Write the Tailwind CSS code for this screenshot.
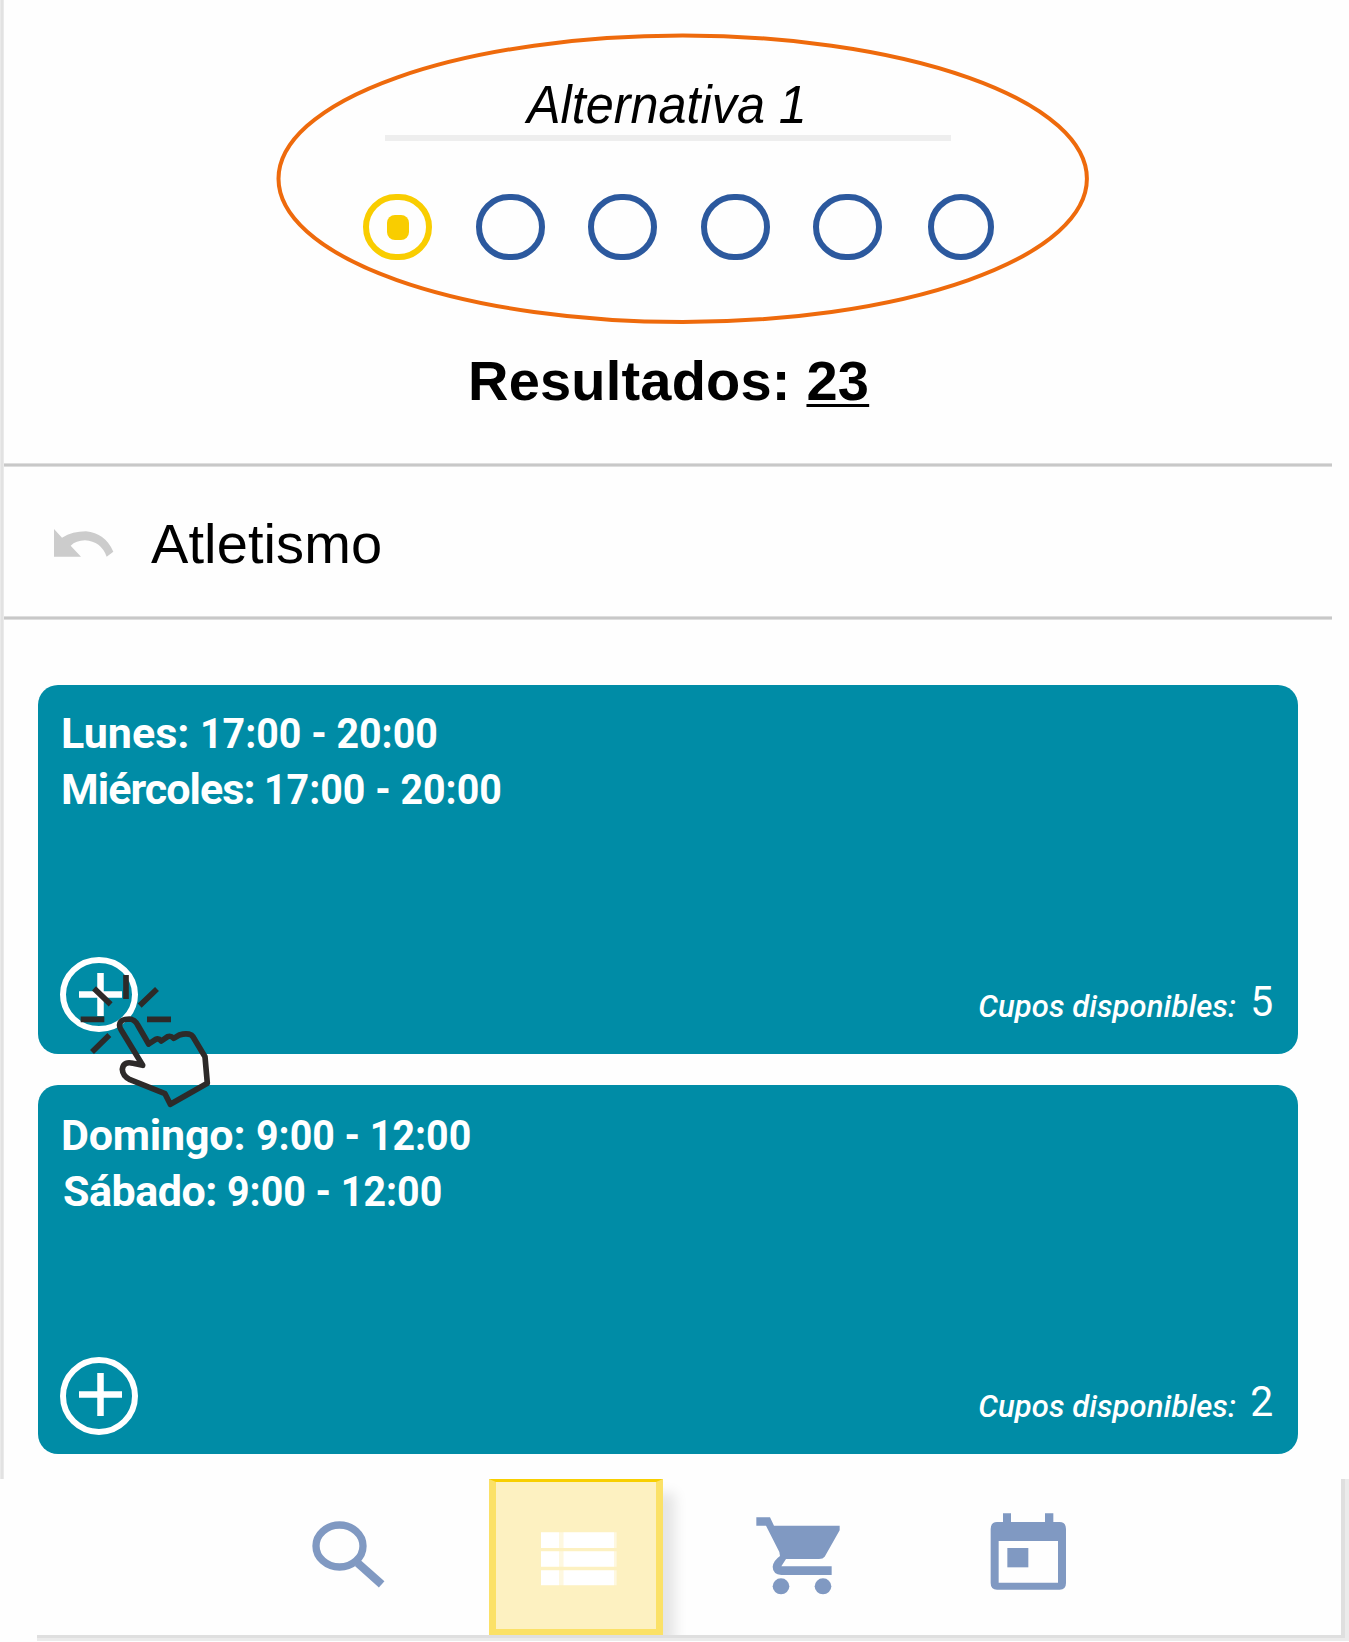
<!DOCTYPE html>
<html lang="es">
<head>
<meta charset="utf-8">
<title>Resultados</title>
<script src="https://cdn.jsdelivr.net/npm/@tailwindcss/browser@4"></script>
</head>
<body class="bg-[#fefefe] w-[1349px] h-[1642px] overflow-hidden font-['Liberation_Sans',Arial,sans-serif] text-black">
<div class="relative flex flex-col w-[1349px] h-[1642px]">
  <div class="h-[1479px] flex pr-[17px]">
    <div class="w-[4px] shrink-0 bg-[#e2e2e2] border-x border-[#eaeaea]"></div>
    <main class="flex-1 flex flex-col">
      <header class="h-[463px] flex flex-col">
        <div class="ml-[381px] w-[566px] h-[141px] pt-[78px] border-b-6 border-[#eeeeee]">
          <h1 class="ml-[142px] w-max text-[53px] leading-[53px] italic whitespace-nowrap origin-left scale-x-[0.95]">Alternativa 1</h1>
        </div>
        <div class="ml-[359px] mt-[53px] flex gap-[43.5px]">
          <span class="w-[69px] h-[66px] rounded-full border-6 border-[#f9cd00] flex items-center justify-center"><i class="w-[22px] h-[25px] rounded-[8px] bg-[#f9cd00]"></i></span>
          <span class="w-[69px] h-[66px] rounded-full border-6 border-[#2c599e]"></span>
          <span class="w-[69px] h-[66px] rounded-full border-6 border-[#2c599e]"></span>
          <span class="w-[69px] h-[66px] rounded-full border-6 border-[#2c599e]"></span>
          <span class="w-[69px] h-[66px] rounded-full border-6 border-[#2c599e]"></span>
          <span class="ml-[2px] w-[66px] h-[66px] rounded-full border-6 border-[#2c599e]"></span>
        </div>
        <p class="ml-[464px] mt-[93px] text-[56px] leading-[56px] tracking-[0.2px] font-bold whitespace-nowrap">Resultados: <span class="underline decoration-[3px] underline-offset-[4px] [text-decoration-skip-ink:none]">23</span></p>
      </header>
      <div class="h-[4px] bg-[#c8c8c8] border-y border-[#dedede]"></div>
      <div class="h-[149px] flex items-start">
        <svg class="ml-[50px] mt-[62px] w-[60px] h-[28px]" viewBox="162 238 180 84" fill="#cccccc"><path d="M162 238L186 264Q218 245 258 245Q315 250 340 306L320 321Q303 275 255 272Q228 273 212 288L243 321H162Z"/></svg>
        <h2 class="ml-[37px] mt-[49px] text-[56px] leading-[56px] tracking-[0.1px] whitespace-nowrap">Atletismo</h2>
      </div>
      <div class="h-[4px] bg-[#c8c8c8] border-y border-[#dedede]"></div>
      <section class="mt-[65px] ml-[34px] w-[1260px] flex flex-col gap-[31px] text-white font-[Roboto,sans-serif]">
        <article class="h-[369px] rounded-[20px] bg-[#008ca6] flex flex-col justify-between">
          <div class="pl-[23px] pt-[20px] text-[43px] leading-[56px] font-bold whitespace-nowrap">
            <p>Lunes: <span class="inline-block origin-left scale-x-[0.915]">17:00 - 20:00</span></p>
            <p><span class="tracking-[-0.95px]">Miércoles: </span><span class="inline-block origin-left scale-x-[0.915]">17:00 - 20:00</span></p>
          </div>
          <div class="flex justify-between items-start h-[97px] pl-[22px] pr-[25px]">
            <svg class="w-[78px] h-[76px]" viewBox="0 0 78 76" fill="none" stroke="#fff"><ellipse cx="39" cy="37.500" rx="36" ry="34.500" stroke-width="6"/><path d="M19 37.500H62M40.500 16V59" stroke-width="6.500"/></svg>
            <p class="mt-[23px] leading-[43px] text-[31px] whitespace-nowrap"><em class="relative top-px mr-[5px] font-medium tracking-[0.1px]">Cupos disponibles:</em> <span class="text-[43px] inline-block origin-right scale-x-[0.95]">5</span></p>
          </div>
        </article>
        <article class="h-[369px] rounded-[20px] bg-[#008ca6] flex flex-col justify-between">
          <div class="pl-[23px] pt-[22px] text-[43px] leading-[56px] font-bold whitespace-nowrap">
            <p><span class="tracking-[-0.2px]">Domingo: </span><span class="inline-block origin-left scale-x-[0.915]">9:00 - 12:00</span></p>
            <p><span class="ml-[2px] tracking-[-0.5px]">Sábado: </span><span class="inline-block origin-left scale-x-[0.915]">9:00 - 12:00</span></p>
          </div>
          <div class="flex justify-between items-start h-[97px] pl-[22px] pr-[25px]">
            <svg class="w-[78px] h-[78px]" viewBox="0 0 78 78" fill="none" stroke="#fff"><circle cx="39" cy="39" r="36" stroke-width="6"/><path d="M19 37.500H62M40.500 16V59" stroke-width="6.500"/></svg>
            <p class="mt-[23px] leading-[43px] text-[31px] whitespace-nowrap"><em class="relative top-px mr-[5px] font-medium tracking-[0.1px]">Cupos disponibles:</em> <span class="text-[43px] inline-block origin-right scale-x-[0.95]">2</span></p>
          </div>
        </article>
      </section>
    </main>
  </div>

  <nav class="h-[162px] ml-[37px] border-b-3 border-r-4 border-[#ebebeb] flex">
    <div class="flex-1 flex items-start border-b-3 border-r-4 border-[#dfdfdf]">
      <svg class="ml-[274px] mt-[40px] w-[75px] h-[70px]" viewBox="933 567 225 210" fill="none" stroke="#8099c2"><ellipse cx="1018.500" cy="648" rx="70.500" ry="63" stroke-width="22"/><path d="M1073 699L1145 763" stroke-width="25"/></svg>
      <div class="ml-[103px] w-[174px] h-[156px] border-7 border-t-3 border-b-6 border-[#fbe167] border-t-[#f8cf00] bg-[#fdf1c1] shadow-[14px_12px_12px_-2px_rgba(0,0,0,0.10)] [clip-path:inset(0_-40px_0_0)]">
        <svg class="ml-[45px] mt-[50px] w-[77px] h-[54px]" viewBox="243 215 231 162" fill="#fff"><path d="M243 216H297V263H243ZM243 273H297V319H243ZM243 330H297V375H243ZM310 216H462V263H310ZM310 273H462V319H310ZM310 330H462V375H310Z"/><path opacity=".5" d="M297 216H310V263H297ZM297 273H310V319H297ZM297 330H310V375H297ZM462 216H470V263H462ZM462 273H470V319H462ZM462 330H470V375H462Z"/></svg>
      </div>
      <svg class="ml-[91px] mt-[37px] w-[87px] h-[80px]" viewBox="882 168 261 240" fill="#8099c2"><path d="M889 172H930L942 197H1139V211L1094 290Q1089 297 1077 297H978L964 319H1115V345H964Q938 342 938 320Q940 302 960 288L958 276L918 197H889Z"/><ellipse cx="963" cy="379" rx="25" ry="24"/><ellipse cx="1089" cy="379" rx="25" ry="24"/></svg>
      <svg class="ml-[149px] mt-[34px] w-[77px] h-[79px]" viewBox="183 518 231 237" fill="#8099c2"><path fill-rule="evenodd" d="M222 519H246V545H348V519H373V545H392Q411 546 411 566V728Q411 748 392 748H204Q185 748 185 728V566Q185 546 204 545H222ZM209 602V727H387V602Z"/><path d="M235 623H298V681H235Z"/></svg>
    </div>
  </nav>

  <!-- highlight ring around the alternatives -->
  <svg class="absolute left-[270px] top-[26px] w-[826px] h-[306px]" viewBox="270 26 826 306" fill="none"><ellipse cx="682.700" cy="178.800" rx="404.200" ry="143.200" stroke="#ee6a0c" stroke-width="4"/></svg>

  <!-- tapping hand -->
  <svg class="absolute left-[30px] top-[930px] w-[220px] h-[200px]" viewBox="0 0 660 600" fill="none" stroke="#2d2a29" stroke-width="17">
    <path d="M288 135V207M192 175L242 223M381 177L329 227M152 268H223M351 268H423M238 315L186 366"/>
    <path stroke-linejoin="round" d="M338 406L274 301C260 278 275 267 298 267Q314 268 323 285L356 342L377 328Q386 324 394 333L413 320Q422 316 431 325L448 315Q470 308 484 315Q489 319 493 327L525 380L532 460L421 523L405 491L300 449Q278 438 277 418C279 398 294 396 309 400Z"/>
  </svg>
</div>
</body>
</html>
